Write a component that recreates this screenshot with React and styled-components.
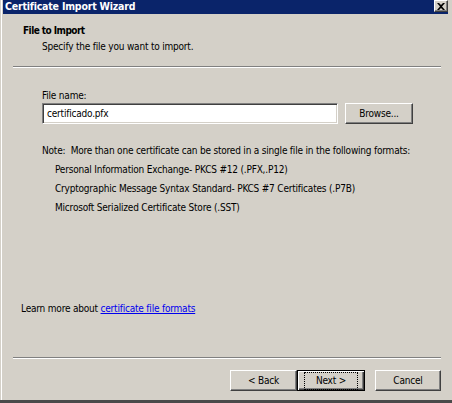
import React from "react";
import styled, { createGlobalStyle } from "styled-components";

const GlobalStyle = createGlobalStyle`
  html, body {
    margin: 0;
    padding: 0;
    background: #d4d0c8;
  }
  body {
    font-family: "DejaVu Sans Condensed", "Liberation Sans", sans-serif;
    font-size: 10px;
    letter-spacing: -0.2px;
    color: #000;
  }
`;

const Window = styled.div`
  width: 452px;
  height: 403px;
  box-sizing: border-box;
  display: flex;
  flex-direction: column;
  padding: 0 4px 0 3px;
  border-bottom: 3px solid #4a4a4a;
  background: linear-gradient(to right, #d4d0c8 0 1px, #fff 1px 2px, #d4d0c8 2px);
`;

const TitleBar = styled.div`
  height: 14px;
  background: #0a246a;
  display: flex;
  align-items: flex-start;
  justify-content: space-between;
  padding-left: 2px;
`;

const TitleText = styled.span`
  color: #fff;
  font-weight: bold;
  font-size: 10.5px;
  letter-spacing: -0.2px;
  line-height: 13px;
`;

const CloseButton = styled.div`
  width: 14px;
  height: 12px;
  box-sizing: border-box;
  background: #d4d0c8;
  border: 1px solid;
  border-color: #fff #404040 #404040 #fff;
  box-shadow: inset -1px -1px #808080;
  display: flex;
  align-items: center;
  justify-content: center;
`;

const Header = styled.div`
  padding: 11px 0 0 20px;
`;

const HeaderTitle = styled.div`
  font-weight: bold;
  letter-spacing: -0.55px;
  line-height: 12px;
`;

const HeaderSub = styled.div`
  line-height: 12px;
  margin-top: 4px;
  padding-left: 19px;
`;

const Separator = styled.div`
  height: 1px;
  background: #808080;
  border-bottom: 1px solid #fff;
  margin: ${(p) => p.$top}px 7px 0 10px;
`;

const Content = styled.div`
  flex: 1;
  display: flex;
  flex-direction: column;
  padding-left: 39px;
`;

const Label = styled.div`
  line-height: 12px;
  margin-top: 22px;
`;

const InputRow = styled.div`
  display: flex;
  gap: 7px;
  margin-top: 1px;
`;

const TextField = styled.div`
  width: 296px;
  height: 21px;
  box-sizing: border-box;
  background: #fff;
  border: 1px solid;
  border-color: #808080 #fff #fff #808080;
  box-shadow: inset 1px 1px #404040, inset -1px -1px #d4d0c8;
  padding: 0 4px;
  line-height: 19px;
`;

const Button = styled.div`
  width: ${(p) => p.$w}px;
  height: 21px;
  box-sizing: border-box;
  background: #d4d0c8;
  border: 1px solid;
  border-color: #fff #404040 #404040 #fff;
  box-shadow: inset -1px -1px #808080;
  display: flex;
  align-items: center;
  justify-content: center;
  line-height: 12px;
`;

const DefaultButton = styled(Button)`
  border: 1px solid #000;
  box-shadow: inset 1px 1px #fff, inset -1px -1px #404040, inset -2px -2px #808080;
`;

const FocusRing = styled.span`
  border: 1px dotted #000;
  padding: 2px 11px;
  line-height: 12px;
`;

const Note = styled.div`
  line-height: 12px;
  margin-top: 21px;
`;

const Format = styled.div`
  line-height: 12px;
  margin-top: 7px;
  padding-left: 13px;
`;

const Footer = styled.div`
  display: flex;
  flex-direction: column;
`;

const LearnMore = styled.div`
  line-height: 12px;
  padding-left: 18px;
  margin-bottom: 42px;
`;

const Link = styled.a`
  color: #0000ee;
  text-decoration: underline;
`;

const ButtonRow = styled.div`
  display: flex;
  justify-content: flex-end;
  margin: 11px 7px 9px 0;
`;

const Gap = styled.div`
  width: 10px;
`;

export default function App() {
  return (
    <>
      <GlobalStyle />
      <Window>
        <TitleBar>
          <TitleText>Certificate Import Wizard</TitleText>
          <CloseButton>
            <svg width="8" height="7" viewBox="0 0 8 7">
              <path d="M0 0h2l2 2 2-2h2L5 3.5 8 7H6L4 5 2 7H0l3-3.5z" fill="#000" />
            </svg>
          </CloseButton>
        </TitleBar>

        <Header>
          <HeaderTitle>File to Import</HeaderTitle>
          <HeaderSub>Specify the file you want to import.</HeaderSub>
        </Header>
        <Separator $top={13} />

        <Content>
          <Label>File name:</Label>
          <InputRow>
            <TextField>certificado.pfx</TextField>
            <Button $w={68}>Browse...</Button>
          </InputRow>
          <Note>Note:&nbsp; More than one certificate can be stored in a single file in the following formats:</Note>
          <Format>Personal Information Exchange- PKCS #12 (.PFX,.P12)</Format>
          <Format>Cryptographic Message Syntax Standard- PKCS #7 Certificates (.P7B)</Format>
          <Format>Microsoft Serialized Certificate Store (.SST)</Format>
        </Content>

        <Footer>
          <LearnMore>
            Learn more about <Link href="#">certificate file formats</Link>
          </LearnMore>
          <Separator $top={0} />
          <ButtonRow>
            <Button $w={67}>&lt; Back</Button>
            <DefaultButton $w={68}>
              <FocusRing>Next &gt;</FocusRing>
            </DefaultButton>
            <Gap />
            <Button $w={66}>Cancel</Button>
          </ButtonRow>
        </Footer>
      </Window>
    </>
  );
}
